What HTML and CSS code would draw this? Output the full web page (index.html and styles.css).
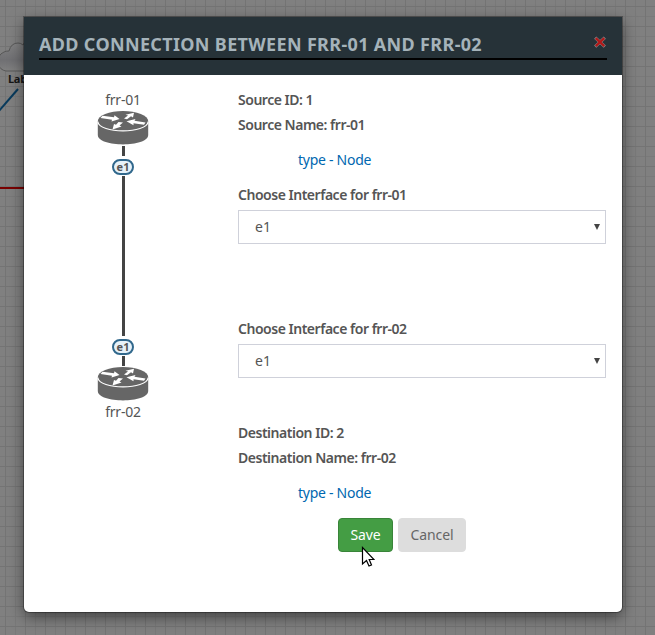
FILE: index.html
```html
<!DOCTYPE html>
<html lang="en">
<head>
<meta charset="utf-8">
<title>Add connection</title>
<link rel="stylesheet" href="styles.css">
</head>
<body>
<svg class="canvas" width="655" height="635" aria-hidden="true">
  <defs>
    <linearGradient id="cloud" x1="0" y1="0" x2="0" y2="1"><stop offset="0" stop-color="#858585"/><stop offset=".65" stop-color="#707073"/><stop offset="1" stop-color="#808080"/></linearGradient>
  </defs>
  <path d="M40 71H6Q0 70-2 64Q-3 55 4 52Q6 51 9 51Q11 43 18 43Q21 43 23 45Q25 40 32 39Z" fill="url(#cloud)" stroke="#585858" stroke-width="1"/>
  <path d="M18 89L-2 112" stroke="#083a5c" stroke-width="2"/>
  <path d="M0 188H30" stroke="#790000" stroke-width="2"/>
  <text class="lab" x="8" y="83">Lab</text>
</svg>
<main class="modal">
  <header class="head">
    <h1 class="title">ADD CONNECTION BETWEEN FRR-01 AND FRR-02</h1>
    <svg class="close" width="12" height="12" viewBox="0 0 12 12"><path d="M1.200 1.700L10.800 10.700M10.800 1.700L1.200 10.700" stroke="#858b8e" stroke-width="3.200"/><path d="M1.700 2.200L10.300 10.200M10.300 2.200L1.700 10.200" stroke="#b01818" stroke-width="2.300"/></svg>
  </header>
  <div class="body">
    <section class="diagram">
      <span class="name">frr-01</span>
      <svg class="router" width="52" height="36" viewBox="0 0 52 36">
        <defs>
          <g id="router">
            <path d="M.8 11V25C1 37.500 51 37.500 51.200 25V11Z" fill="#666"/>
            <ellipse cx="26" cy="11" rx="25.200" ry="10" fill="#666"/>
            <path d="M.8 11.500C2 24 50 24 51.200 11.500" fill="none" stroke="#fff" stroke-width="1.200"/>
            <path fill="#fff" d="M5.500 5.800L17 7.300L17.500 5.300L22.500 9L14.500 11.500L15 9.700L3.500 8ZM27 8.500L31 5.500L28.500 4.800L37 2.800L36 7.500L34 6.300L30 9.300ZM29.500 11.300L38.500 9L37.500 10.700L48.500 12.500L47 14.700L36.500 13.200L36.500 15.200ZM21.500 12L26 12.500L22.500 15.500L24.500 16.500L15.500 19.500L17 14L19 14.800Z"/>
          </g>
        </defs>
        <use href="#router"/>
      </svg>
      <i class="stub"></i>
      <b class="port">e1</b>
      <i class="link"></i>
      <b class="port">e1</b>
      <i class="stub"></i>
      <svg class="router" width="52" height="36" viewBox="0 0 52 36"><use href="#router"/></svg>
      <span class="name">frr-02</span>
    </section>
    <section class="form">
      <p class="label">Source ID: 1</p>
      <p class="label">Source Name: frr-01</p>
      <p class="type">type - Node</p>
      <p class="label">Choose Interface for frr-01</p>
      <div class="select"><span>e1</span><i class="arrow"></i></div>
      <p class="label second">Choose Interface for frr-02</p>
      <div class="select"><span>e1</span><i class="arrow"></i></div>
      <p class="label dest">Destination ID: 2</p>
      <p class="label">Destination Name: frr-02</p>
      <p class="type">type - Node</p>
      <div class="buttons"><button class="btn save">Save</button><button class="btn cancel">Cancel</button></div>
    </section>
  </div>
</main>
<svg class="cursor" width="14" height="22" viewBox="0 0 14 22"><path d="M1.500 1.500V18L5.500 14.500L8 20L10.500 19L8.200 13.500H13Z" fill="#fff" stroke="#000" stroke-width="1.200"/></svg>
</body>
</html>
```
FILE: styles.css
```css
* { box-sizing: border-box; }
body {
  margin: 0;
  height: 635px;
  padding: 17px 33px 0 24px;
  overflow: hidden;
  font: 14px/20px "Noto Sans", sans-serif;
  color: #555;
  background-color: #808080;
  background-image:
    linear-gradient(#747474 1px, transparent 1px),
    linear-gradient(90deg, #747474 1px, transparent 1px),
    linear-gradient(#797979 1px, transparent 1px),
    linear-gradient(90deg, #797979 1px, transparent 1px);
  background-size: 20px 20px;
  background-position: 0 6px, 5px 0, 0 16px, 15px 0;
}
.canvas { position: absolute; left: 0; top: 0; }
.lab { font: bold 11px "Noto Sans", sans-serif; fill: #161616; letter-spacing: -.3px; }
.modal {
  position: relative;
  width: 598px;
  height: 595px;
  background: #fff;
  border-radius: 0 0 5px 5px;
  overflow: hidden;
  box-shadow: 0 0 0 1px rgba(0,0,0,.3), 0 5px 15px rgba(0,0,0,.5);
}
.head { position: relative; height: 58px; padding: 15px 15px 0; background: #263238; }
.title {
  margin: 0;
  height: 28px;
  font: bold 18px/25px "Noto Sans", sans-serif;
  letter-spacing: .34px;
  color: #a5b3ba;
  border-bottom: 2px solid #000;
  white-space: nowrap;
}
.close { position: absolute; right: 16px; top: 19px; }
.body { display: flex; }
.diagram { width: 198px; padding-top: 15px; display: flex; flex-direction: column; align-items: center; }
.name { letter-spacing: -.2px; }
.router { display: block; }
.stub { width: 3px; height: 10px; background: #444; }
.link { width: 3px; height: 160px; background: #444; }
.port {
  width: 22px;
  height: 16px;
  margin: 3px 0 1px;
  border: 2px solid #31688c;
  border-radius: 8px;
  background: #e7f2fa;
  font-size: 11px;
  line-height: 11px;
  text-align: center;
}
.form { width: 368px; margin-left: 16px; padding-top: 15px; white-space: nowrap; }
.label { margin: 0 0 5px; font-weight: 600; letter-spacing: -.48px; }
.type { margin: 15px 0 15px 60px; color: #0067b0; letter-spacing: -.27px; }
.select {
  display: flex;
  align-items: center;
  justify-content: space-between;
  height: 34px;
  padding: 0 5px 0 16px;
  border: 1px solid #cfd1da;
}
.arrow { border: 3px solid transparent; border-top: 6px solid #444; border-bottom: 0; }
.second { margin-top: 75px; }
.dest { margin-top: 45px; }
.buttons { display: flex; gap: 5px; margin-left: 100px; }
.btn { height: 34px; padding: 0 0 2px; border: 1px solid; border-radius: 4px; font: 14px "Noto Sans", sans-serif; letter-spacing: -.1px; }
.save { width: 55px; color: #fff; background: #449d44; border-color: #398439; }
.cancel { width: 68px; color: #666; background: #ddd; border-color: #ddd; }
.cursor { position: absolute; left: 361px; top: 546px; }
```
